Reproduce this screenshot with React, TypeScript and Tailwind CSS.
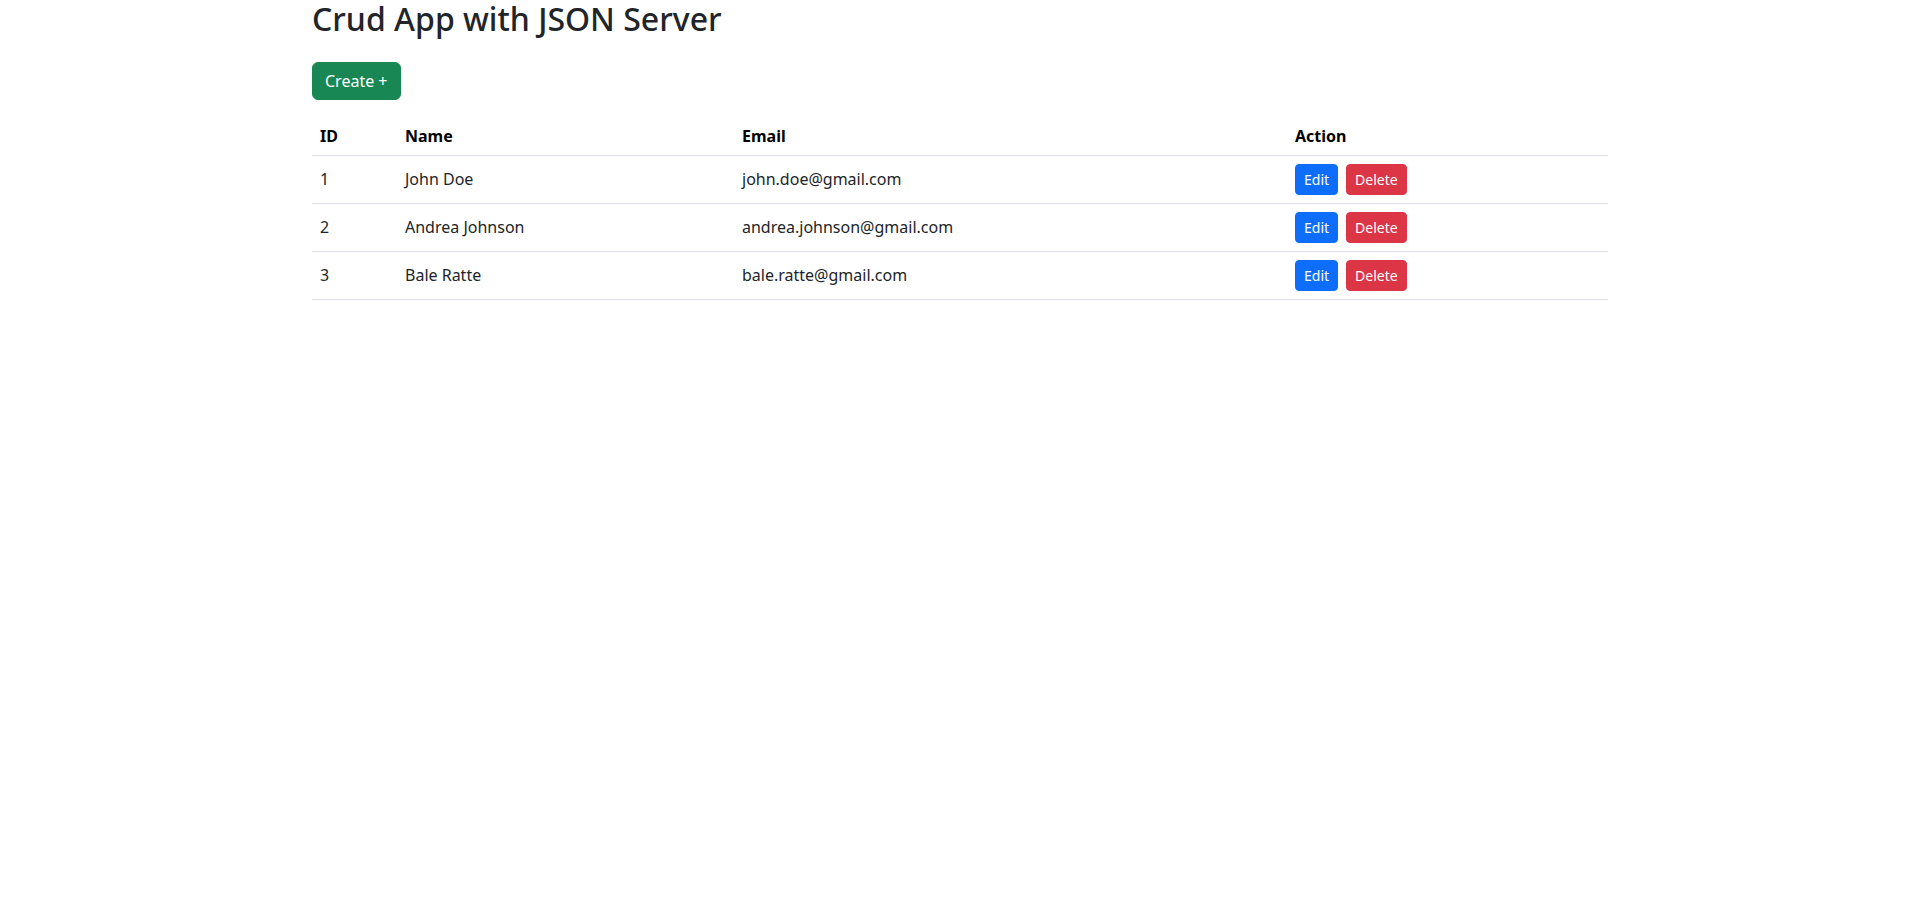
const users = [
  { id: 1, name: 'John Doe', email: 'john.doe@gmail.com' },
  { id: 2, name: 'Andrea Johnson', email: 'andrea.johnson@gmail.com' },
  { id: 3, name: 'Bale Ratte', email: 'bale.ratte@gmail.com' },
];

export default function App() {
  return (
    <div className="min-h-screen bg-white text-[#212529] font-['Segoe_UI','Noto_Sans','Liberation_Sans',sans-serif] text-base leading-normal">
      <div className="mx-auto max-w-[1320px] px-3">
        <h2 className="mb-2 text-[32px] font-medium leading-[1.2]">Crud App with JSON Server</h2>
        <div className="mt-6">
          <button className="rounded-md border border-[#198754] bg-[#198754] px-3 py-1.5 text-base text-white">
            Create +
          </button>
        </div>
        <table className="mt-[15px] w-full table-fixed border-collapse align-top">
          <thead>
            <tr className="border-b border-[#dee2e6] text-left">
              <th className="w-[85px] px-2 pt-[9px] pb-[7px] font-bold text-black">ID</th>
              <th className="w-[337px] px-2 pt-[9px] pb-[7px] font-bold text-black">Name</th>
              <th className="w-[553px] px-2 pt-[9px] pb-[7px] font-bold text-black">Email</th>
              <th className="px-2 pt-[9px] pb-[7px] font-bold text-black">Action</th>
            </tr>
          </thead>
          <tbody>
            {users.map((u) => (
              <tr key={u.id} className="border-b border-[#dee2e6]">
                <td className="px-2 pt-1.5 pb-2">{u.id}</td>
                <td className="px-2 pt-1.5 pb-2">{u.name}</td>
                <td className="px-2 pt-1.5 pb-2">{u.email}</td>
                <td className="p-2">
                  <div className="flex gap-2">
                    <button className="rounded border border-[#0d6efd] bg-[#0d6efd] px-2 py-1 text-sm leading-[1.5] text-white">
                      Edit
                    </button>
                    <button className="rounded border border-[#dc3545] bg-[#dc3545] px-2 py-1 text-sm leading-[1.5] text-white">
                      Delete
                    </button>
                  </div>
                </td>
              </tr>
            ))}
          </tbody>
        </table>
      </div>
    </div>
  );
}
